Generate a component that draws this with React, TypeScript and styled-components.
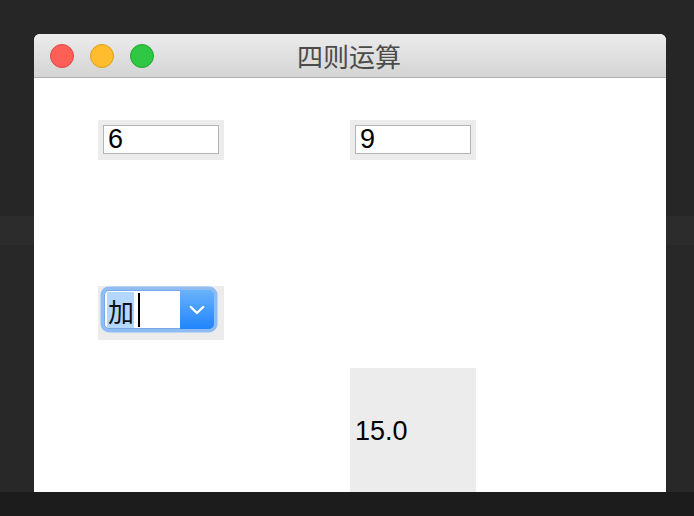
import React from "react";
import styled, { createGlobalStyle } from "styled-components";

const GlobalStyle = createGlobalStyle`
  html, body {
    margin: 0;
    padding: 0;
    height: 100%;
  }
  body {
    background: linear-gradient(
      to bottom,
      #262626 0,
      #262626 216px,
      #2c2c2c 216px,
      #2c2c2c 245px,
      #282828 245px,
      #282828 492px,
      #1c1c1c 492px
    );
    font-family: "Liberation Sans", Arial, sans-serif;
    overflow: hidden;
  }
`;

const Desktop = styled.div`
  padding: 34px 0 0 34px;
  height: 516px;
  box-sizing: border-box;
`;

const Window = styled.div`
  width: 632px;
  height: 458px;
  display: flex;
  flex-direction: column;
  overflow: hidden;
  border-radius: 6px 6px 0 0;
  background: #ffffff;
`;

const TitleBar = styled.div`
  position: relative;
  height: 43px;
  flex: none;
  display: flex;
  align-items: center;
  justify-content: center;
  background: linear-gradient(to bottom, #ececec, #d4d4d4);
  border-bottom: 1px solid #b1b1b1;
`;

const Lights = styled.div`
  position: absolute;
  left: 16px;
  top: 10px;
  display: flex;
  gap: 16px;
`;

const Light = styled.span<{ $fill: string; $edge: string }>`
  width: 24px;
  height: 24px;
  border-radius: 50%;
  box-sizing: border-box;
  background: ${(p) => p.$fill};
  border: 1px solid ${(p) => p.$edge};
`;

const Title = styled.div`
  font-family: "Noto Sans CJK SC", sans-serif;
  font-size: 26px;
  color: #4b4b4b;
  line-height: 1;
  margin-left: -2px;
`;

const Content = styled.div`
  flex: 1;
  display: flex;
  flex-direction: column;
  padding: 42px 0 0 64px;
`;

const Row = styled.div<{ $top?: number }>`
  display: grid;
  grid-template-columns: 126px 126px;
  column-gap: 126px;
  margin-top: ${(p) => p.$top ?? 0}px;
`;

const Panel = styled.div<{ $h: number }>`
  background: #ececec;
  height: ${(p) => p.$h}px;
  box-sizing: border-box;
`;

const FieldPanel = styled(Panel)`
  padding: 5px;
`;

const TextField = styled.div`
  height: 29px;
  box-sizing: border-box;
  border: 1px solid #b4b4b4;
  background: #fff;
  display: flex;
  align-items: center;
  padding-left: 4px;
  font-size: 27px;
  color: #000;
`;

const ComboPanel = styled(Panel)`
  padding: 4px 0 0 6px;
`;

const Combo = styled.div`
  width: 110px;
  height: 39px;
  box-sizing: border-box;
  display: flex;
  border-radius: 5px;
  background: #fff;
  border: 1px solid #78a8e6;
  box-shadow: 0 0 0 3.5px #8fbdf3;
`;

const ComboText = styled.div`
  flex: 1;
  display: flex;
  align-items: stretch;
  padding: 1px 0 0 2px;
`;

const Selected = styled.span`
  display: flex;
  align-items: center;
  background: #b3d7ff;
  font-family: "Noto Sans CJK SC", sans-serif;
  font-size: 26px;
  color: #111;
  padding: 0 0 0 1px;
`;

const Caret = styled.span`
  width: 2px;
  margin: 1px 0 1px 4px;
  background: #000;
`;

const ComboButton = styled.div`
  width: 34px;
  margin: -1px -1px -1px 0;
  border-radius: 0 5px 5px 0;
  background: linear-gradient(to bottom, #6ab2fb, #2084fb);
  display: flex;
  align-items: center;
  justify-content: center;
`;

const ResultPanel = styled(Panel)`
  display: flex;
  align-items: center;
  padding-left: 5px;
  font-size: 27px;
  color: #000;
`;

export default function App() {
  return (
    <>
      <GlobalStyle />
      <Desktop>
        <Window>
          <TitleBar>
            <Lights>
              <Light $fill="#fe5f57" $edge="#e2463f" />
              <Light $fill="#febc2e" $edge="#e1a116" />
              <Light $fill="#2fc744" $edge="#1aab29" />
            </Lights>
            <Title>四则运算</Title>
          </TitleBar>
          <Content>
            <Row>
              <FieldPanel $h={40}>
                <TextField>6</TextField>
              </FieldPanel>
              <FieldPanel $h={40}>
                <TextField>9</TextField>
              </FieldPanel>
            </Row>
            <Row $top={126}>
              <ComboPanel $h={54}>
                <Combo>
                  <ComboText>
                    <Selected>加</Selected>
                    <Caret />
                  </ComboText>
                  <ComboButton>
                    <svg width="16" height="10" viewBox="0 0 16 10">
                      <path
                        d="M1.8 2 L8 8 L14.2 2"
                        fill="none"
                        stroke="#fff"
                        strokeWidth="2.4"
                        strokeLinecap="round"
                        strokeLinejoin="round"
                      />
                    </svg>
                  </ComboButton>
                </Combo>
              </ComboPanel>
              <div />
            </Row>
            <Row $top={28}>
              <div />
              <ResultPanel $h={126}>15.0</ResultPanel>
            </Row>
          </Content>
        </Window>
      </Desktop>
    </>
  );
}
